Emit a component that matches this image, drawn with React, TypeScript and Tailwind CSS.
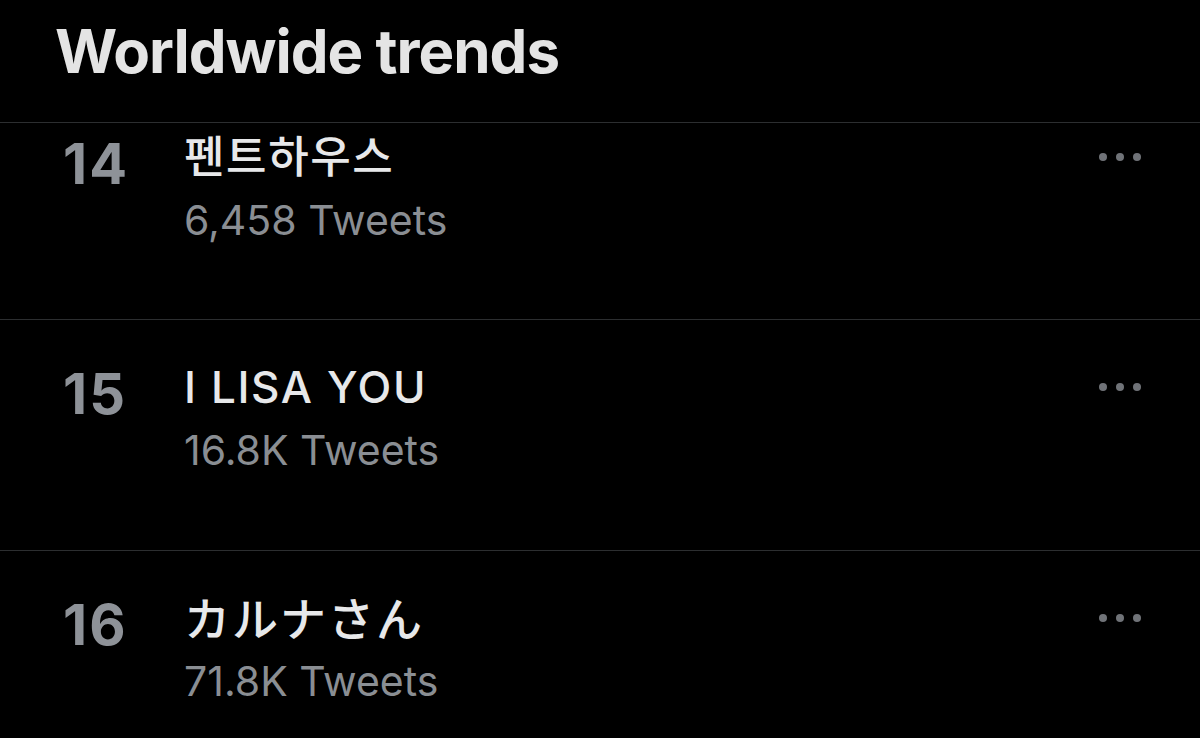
import React from "react";

const font = { fontFamily: 'Inter, "Noto Sans CJK KR", "Noto Sans CJK JP", sans-serif' };

function Dots() {
  return (
    <div className="ml-auto mr-[59px] flex h-[44px] items-center gap-[9px]">
      <span className="h-[8px] w-[8px] rounded-full bg-[#707378]" />
      <span className="h-[8px] w-[8px] rounded-full bg-[#707378]" />
      <span className="h-[8px] w-[8px] rounded-full bg-[#707378]" />
    </div>
  );
}

function Row({
  rank,
  title,
  count,
  first,
  cjk,
}: {
  rank: string;
  title: string;
  count: string;
  first?: boolean;
  cjk?: boolean;
}) {
  return (
    <div
      className={
        "flex items-start border-b border-[#2c2e30] " +
        (first ? "h-[197px] pt-[12px]" : "h-[231px] pt-[45px]")
      }
    >
      <div className="w-[184px] pl-[63px] pt-[1px] text-[56px] font-bold leading-none tracking-[2px] text-[#8e9298]">
        {rank}
      </div>
      <div className="flex flex-col">
        <div
          className={
            "h-[44px] font-medium leading-none text-[#e7e8ea] " +
            (cjk ? "text-[46px] tracking-[2px]" : "text-[44px] tracking-[1.6px]")
          }
        >
          {title}
        </div>
        <div className="mt-[21px] text-[41px] font-normal leading-none tracking-[0px] text-[#8a8e93]">{count}</div>
      </div>
      <Dots />
    </div>
  );
}

export default function App() {
  return (
    <div className="h-[738px] w-[1200px] overflow-hidden bg-black" style={font}>
      <div className="h-[123px] border-b border-[#2c2e30] pl-[55px] pt-[21px]">
        <div className="text-[60px] font-bold leading-none tracking-[-1px] text-[#e4e4e4]">Worldwide trends</div>
      </div>
      <Row first rank="14" title="펜트하우스" count="6,458 Tweets" />
      <Row rank="15" title="I LISA YOU" count="16.8K Tweets" />
      <Row rank="16" title="カルナさん" count="71.8K Tweets" cjk />
    </div>
  );
}
